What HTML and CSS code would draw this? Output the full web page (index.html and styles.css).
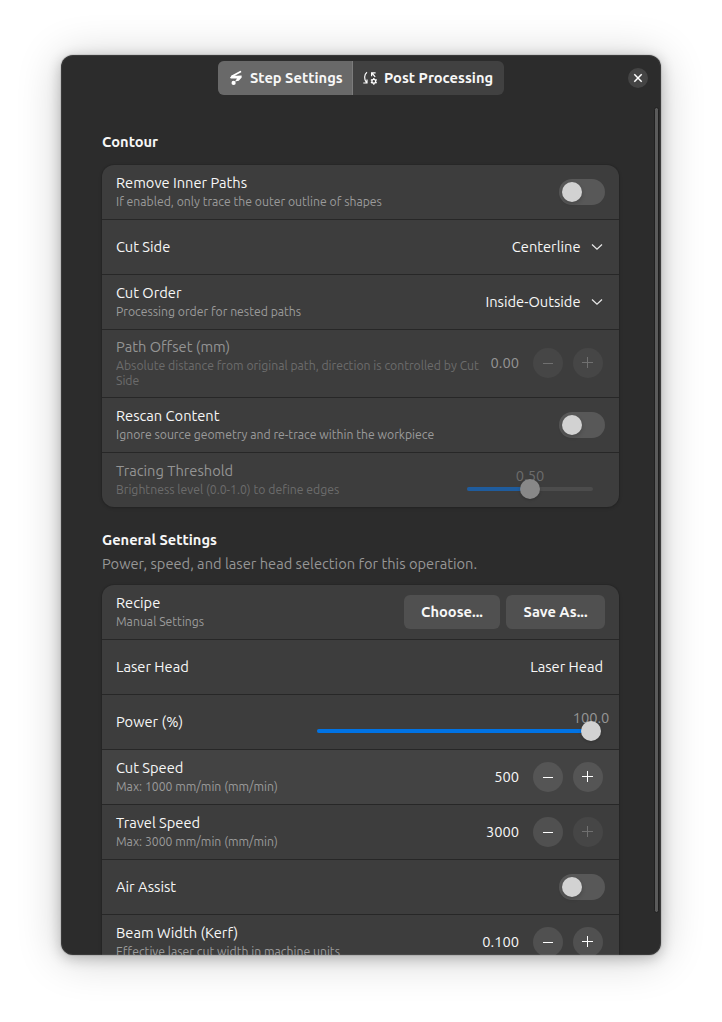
FILE: index.html
```html
<!DOCTYPE html>
<html lang="en">

<head>
    <meta charset="UTF-8">
    <meta name="viewport" content="width=device-width, initial-scale=1.0">
    <title>Step Settings</title>
    <link rel="stylesheet" href="styles.css">
</head>

<body>
    <div class="window">
        <div class="header">
            <div class="tabs">
                <div class="tab tab-active">
                    <svg width="16" height="16" viewBox="0 0 16 16">
                        <path d="M12.400 1.800L4 6.300" stroke="#fff" stroke-width="1.800" stroke-linecap="round" />
                        <path d="M2 7.400L4.200 5.300L9 5.800L13.600 5.400L13.700 7.400L10.800 10.800L7 11.400L9 8.600L2.800 8.600z" fill="#fff" />
                        <circle cx="5.600" cy="12.900" r="2.100" fill="#fff" />
                    </svg>
                    <span>Step Settings</span>
                </div>
                <div class="tab">
                    <svg width="16" height="16" viewBox="0 0 16 16">
                        <path d="M5 2.200C2 4.500 1.900 9.500 4.500 12.500M1.300 13H5V9.600M9.600 6.200V2.800H13.600M9.900 3L13.200 6.800" fill="none" stroke="#fff" stroke-width="1.200" />
                        <circle cx="11.800" cy="11.300" r="1.900" fill="none" stroke="#fff" stroke-width="1.300" />
                        <path d="M11.800 8v1.400M11.800 13.200v1.500M8.900 9.600l1.200.7M13.500 12.300l1.200.7M8.900 13l1.200-.7M13.500 10.300l1.200-.7" stroke="#fff" stroke-width="1.300" />
                    </svg>
                    <span>Post Processing</span>
                </div>
            </div>
            <div class="close">
                <svg width="20" height="20" viewBox="0 0 20 20">
                    <path d="M6.300 6.300L13.700 13.700M13.700 6.300L6.300 13.700" stroke="#fff" stroke-width="1.500" />
                </svg>
            </div>
        </div>
        <div class="content">
            <div class="group-title contour">Contour</div>
            <div class="card">
                <div class="row">
                    <div class="label">
                        <div class="title">Remove Inner Paths</div>
                        <div class="sub">If enabled, only trace the outer outline of shapes</div>
                    </div>
                    <div class="switch"></div>
                </div>
                <div class="row">
                    <div class="label">
                        <div class="title">Cut Side</div>
                    </div>
                    <div class="select">Centerline
                        <svg width="12" height="8" viewBox="0 0 12 8"><path d="M1 1.500L6 6.200L11 1.500" /></svg>
                    </div>
                </div>
                <div class="row">
                    <div class="label">
                        <div class="title">Cut Order</div>
                        <div class="sub">Processing order for nested paths</div>
                    </div>
                    <div class="select">Inside-Outside
                        <svg width="12" height="8" viewBox="0 0 12 8"><path d="M1 1.500L6 6.200L11 1.500" /></svg>
                    </div>
                </div>
                <div class="row row-tall disabled">
                    <div class="label">
                        <div class="title">Path Offset (mm)</div>
                        <div class="sub">Absolute distance from original path, direction is controlled by Cut Side</div>
                    </div>
                    <div class="spin">
                        <span class="num">0.00</span>
                        <span class="btn minus"></span>
                        <span class="btn plus"></span>
                    </div>
                </div>
                <div class="row">
                    <div class="label">
                        <div class="title">Rescan Content</div>
                        <div class="sub">Ignore source geometry and re-trace within the workpiece</div>
                    </div>
                    <div class="switch"></div>
                </div>
                <div class="row disabled">
                    <div class="label">
                        <div class="title">Tracing Threshold</div>
                        <div class="sub">Brightness level (0.0-1.0) to define edges</div>
                    </div>
                    <div class="slider slider-short">
                        <div class="fill" style="width: 50%"></div>
                        <span class="value" style="left: 50%">0.50</span>
                        <span class="thumb" style="left: 50%"></span>
                    </div>
                </div>
            </div>

            <div class="group-title general">General Settings</div>
            <div class="group-desc">Power, speed, and laser head selection for this operation.</div>
            <div class="card">
                <div class="row">
                    <div class="label">
                        <div class="title">Recipe</div>
                        <div class="sub">Manual Settings</div>
                    </div>
                    <div class="buttons">
                        <div class="button choose">Choose...</div>
                        <div class="button save">Save As...</div>
                    </div>
                </div>
                <div class="row">
                    <div class="label">
                        <div class="title">Laser Head</div>
                    </div>
                    <div class="select">Laser Head</div>
                </div>
                <div class="row">
                    <div class="label">
                        <div class="title">Power (%)</div>
                    </div>
                    <div class="slider slider-long">
                        <div class="fill" style="width: 100%"></div>
                        <span class="value" style="left: 100%">100.0</span>
                        <span class="thumb" style="left: 100%"></span>
                    </div>
                </div>
                <div class="row row-hover">
                    <div class="label">
                        <div class="title">Cut Speed</div>
                        <div class="sub">Max: 1000 mm/min (mm/min)</div>
                    </div>
                    <div class="spin">
                        <span class="num">500</span>
                        <span class="btn minus"></span>
                        <span class="btn plus"></span>
                    </div>
                </div>
                <div class="row">
                    <div class="label">
                        <div class="title">Travel Speed</div>
                        <div class="sub">Max: 3000 mm/min (mm/min)</div>
                    </div>
                    <div class="spin">
                        <span class="num">3000</span>
                        <span class="btn minus"></span>
                        <span class="btn plus btn-off"></span>
                    </div>
                </div>
                <div class="row">
                    <div class="label">
                        <div class="title">Air Assist</div>
                    </div>
                    <div class="switch"></div>
                </div>
                <div class="row">
                    <div class="label">
                        <div class="title">Beam Width (Kerf)</div>
                        <div class="sub">Effective laser cut width in machine units</div>
                    </div>
                    <div class="spin">
                        <span class="num">0.100</span>
                        <span class="btn minus"></span>
                        <span class="btn plus"></span>
                    </div>
                </div>
            </div>
        </div>
        <div class="scrollbar"></div>
    </div>
</body>

</html>
```
FILE: styles.css
```css
* {
    box-sizing: border-box;
}

body {
    margin: 0;
    padding: 55px 61px 0;
    height: 1022px;
    overflow: hidden;
    background: #ffffff;
    font-family: Ubuntu, "Noto Sans", sans-serif;
    font-size: 14.667px;
    line-height: 20px;
    color: #f7f7f7;
}

.window {
    position: relative;
    width: 600px;
    height: 900px;
    overflow: hidden;
    border-radius: 12px;
    background: #2c2c2c;
    box-shadow: 0 0 0 1px rgba(0, 0, 0, 0.08), 0 3px 14px rgba(0, 0, 0, 0.24), 0 3px 45px rgba(0, 0, 0, 0.2);
}

/* window edge highlight */
.window::after {
    content: "";
    position: absolute;
    inset: 0;
    border: 1px solid rgba(255, 255, 255, 0.07);
    border-radius: 12px;
}

.header {
    display: flex;
    justify-content: flex-end;
    align-items: center;
    height: 46px;
    padding-right: 13px;
}

.tabs {
    display: flex;
    width: 286px;
    height: 34px;
    margin-right: 124px;
    border-radius: 6px;
    overflow: hidden;
    background: #414141;
}

.tab {
    display: flex;
    align-items: center;
    gap: 6px;
    padding-left: 9px;
    font-weight: 700;
    white-space: nowrap;
}

.tab-active {
    width: 135px;
    padding-left: 10px;
    background: #696969;
    border-right: 1px solid #7c7c7c;
}

.close {
    width: 20px;
    height: 20px;
    border-radius: 10px;
    background: #444444;
}

.close svg {
    display: block;
}

.content {
    width: 517px;
    margin: 31px 0 0 41px;
}

.group-title {
    font-weight: 700;
}

.contour {
    margin-bottom: 13px;
}

.general {
    margin-top: 23px;
}

.group-desc {
    margin: 4px 0 11px;
    color: #969696;
}

.card {
    border-radius: 12px;
    background: #3d3d3d;
    box-shadow: 0 1px 3px 1px rgba(0, 0, 0, 0.12), 0 0 0 1px rgba(0, 0, 0, 0.06);
}

.row {
    display: flex;
    justify-content: space-between;
    align-items: center;
    gap: 6px;
    height: 55px;
    padding: 0 14px;
    border-bottom: 1px solid #272727;
}

.row:last-child {
    height: 54px;
    border-bottom: none;
}

.row-tall {
    height: 68px;
}

.row-hover {
    background: #434343;
}

.label {
    flex: 1;
}

.sub {
    padding: 1px 0 3px;
    font-size: 12.23px;
    line-height: 15px;
    color: #9b9b9b;
}

.disabled .title,
.disabled .num {
    color: #949494;
}

.disabled .sub {
    color: #6c6c6c;
}

.switch {
    display: flex;
    width: 46px;
    height: 26px;
    padding: 3px;
    border-radius: 13px;
    background: #585858;
}

.switch::before {
    content: "";
    width: 20px;
    height: 20px;
    border-radius: 10px;
    background: #d2d2d2;
    box-shadow: 0 2px 4px rgba(0, 0, 0, 0.2);
}

.select {
    display: flex;
    align-items: center;
    gap: 10.5px;
    padding-right: 2px;
}

.select path {
    fill: none;
    stroke: #e6e6e6;
    stroke-width: 1.3;
}

.spin {
    display: flex;
    align-items: center;
    gap: 10px;
    padding-right: 2px;
}

.row-tall .spin {
    padding-bottom: 1px;
}

.num {
    margin-right: 4px;
}

.btn {
    width: 30px;
    height: 30px;
    border-radius: 15px;
    background: linear-gradient(#fff, #fff) no-repeat 10px 15px / 10px 1px #505050;
}

.plus {
    background: linear-gradient(#fff, #fff) no-repeat 9px 14px / 11px 1px,
        linear-gradient(#fff, #fff) no-repeat 14px 9px / 1px 11px #505050;
}

.row-hover .btn {
    background-color: #555555;
}

.disabled .minus {
    background: linear-gradient(#707070, #707070) no-repeat 10px 15px / 10px 1px #464646;
}

.disabled .plus,
.btn-off {
    background: linear-gradient(#707070, #707070) no-repeat 9px 14px / 11px 1px,
        linear-gradient(#707070, #707070) no-repeat 14px 9px / 1px 11px #464646;
}

.slider {
    position: relative;
    height: 4px;
    border-radius: 2px;
    background: #4c4c4c;
}

.slider-short {
    width: 126px;
    margin: 18px 12px 0 0;
}

.slider-long {
    width: 274px;
    margin: 18px 14px 0 0;
}

.fill {
    height: 4px;
    border-radius: 2px;
    background: #0073e5;
}

.value {
    position: absolute;
    top: -21px;
    transform: translateX(-50%);
    color: #969696;
}

.thumb {
    position: absolute;
    top: -8px;
    width: 20px;
    height: 20px;
    margin-left: -10px;
    border-radius: 10px;
    background: #d2d2d2;
    box-shadow: 0 1px 3px rgba(0, 0, 0, 0.2);
}

.disabled .fill {
    background: #1f5c9d;
}

.disabled .value {
    color: #6c6c6c;
}

.disabled .thumb {
    background: #888888;
}

.buttons {
    display: flex;
    gap: 6px;
}

.button {
    height: 34px;
    border-radius: 6px;
    background: #505050;
    font-weight: 700;
    line-height: 34px;
    text-align: center;
}

.choose {
    width: 96px;
}

.save {
    width: 99px;
}

.scrollbar {
    position: absolute;
    top: 52px;
    right: 2px;
    width: 5px;
    height: 806px;
    border: 1px solid #202020;
    border-radius: 3px;
    background: #5a5a5a;
}
```
